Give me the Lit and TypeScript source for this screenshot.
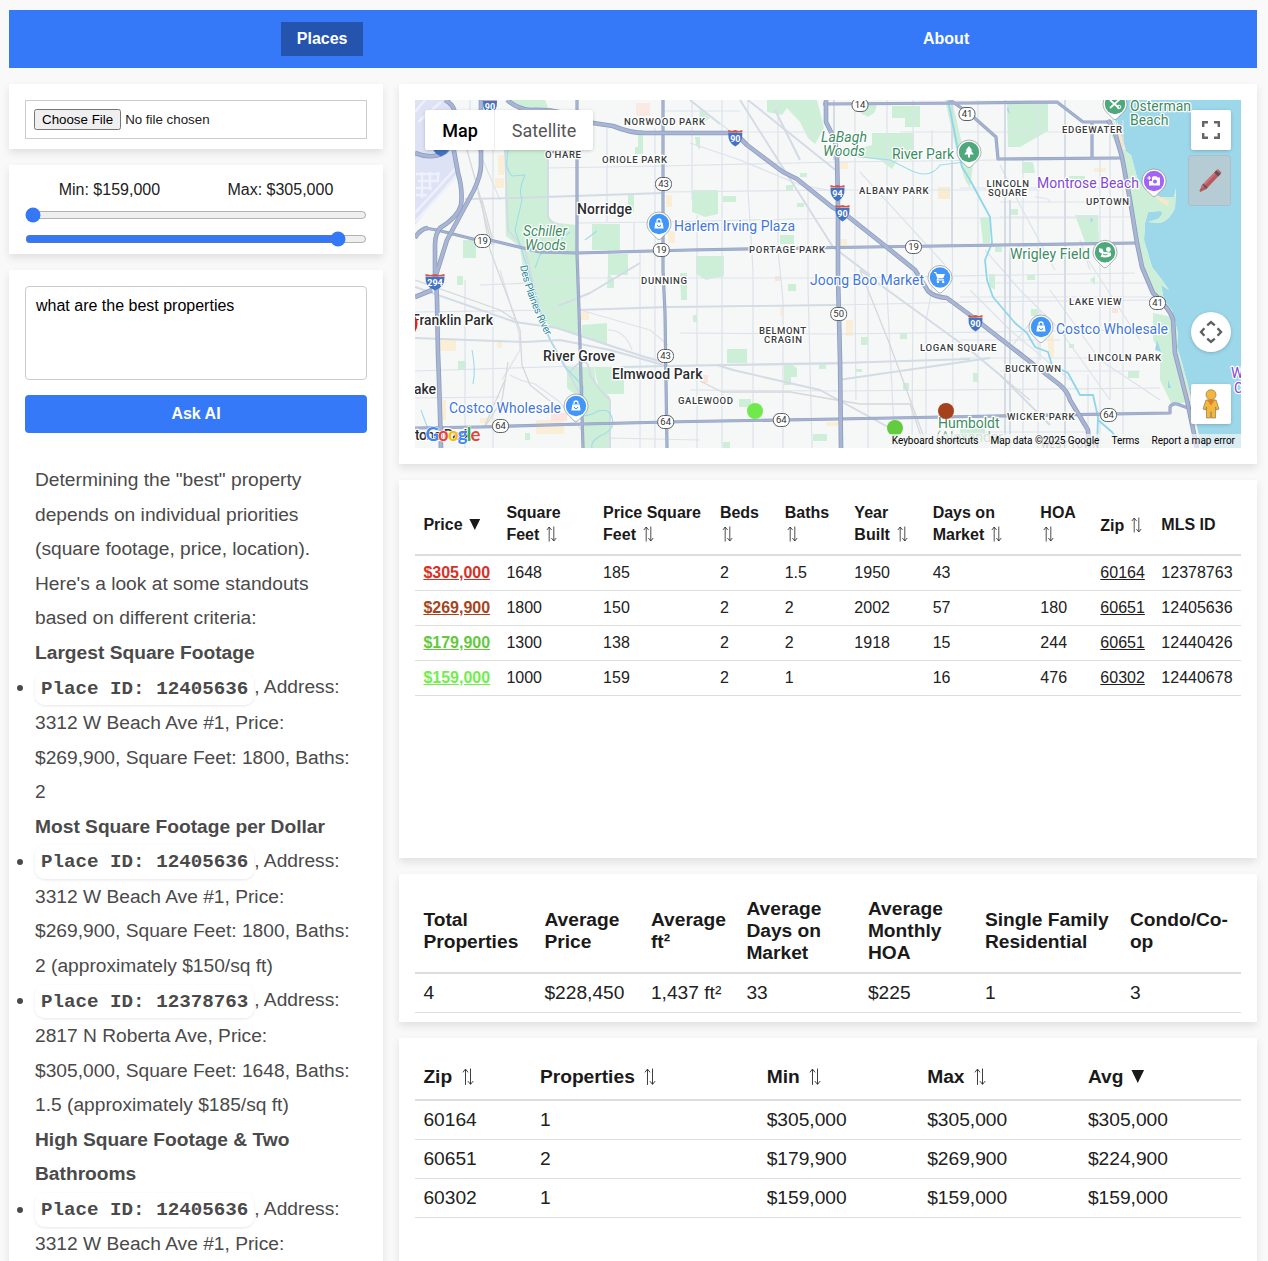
import { LitElement, html, svg, css, nothing } from "lit";
import { customElement } from "lit/decorators.js";

type Label = [string, number, number, number, string];

const LABELS: Label[] = [
  ["NORWOOD PARK", 624, 124.5, 81, "hood"],
  ["O'HARE", 545, 157.5, 36, "hood"],
  ["ORIOLE PARK", 602, 162.5, 65, "hood"],
  ["EDGEWATER", 1062, 132.5, 60, "hood"],
  ["LINCOLN", 986.5, 187, 42.5, "hood"],
  ["SQUARE", 988, 195.5, 39, "hood"],
  ["UPTOWN", 1086, 204.5, 43, "hood"],
  ["ALBANY PARK", 859, 193.5, 69.5, "hood"],
  ["PORTAGE PARK", 749, 252.5, 76, "hood"],
  ["DUNNING", 641, 283.5, 46, "hood"],
  ["GALEWOOD", 678, 403.5, 55, "hood"],
  ["BELMONT", 759, 333.5, 47, "hood"],
  ["CRAGIN", 764, 342.5, 38, "hood"],
  ["LOGAN SQUARE", 920, 350.5, 76.5, "hood"],
  ["LAKE VIEW", 1069, 304.5, 52.5, "hood"],
  ["LINCOLN PARK", 1088, 360.5, 73, "hood"],
  ["BUCKTOWN", 1005, 371.5, 56, "hood"],
  ["WICKER PARK", 1007, 419.5, 67.5, "hood"],
  ["WEST TOWN", 1041, 447.5, 58, "hood faint"],
  ["Norridge", 577, 214, 55, "town"],
  ["Franklin Park", 412, 325, 81, "town"],
  ["River Grove", 543, 361, 72, "town"],
  ["Elmwood Park", 612, 379, 90.5, "town"],
  ["ake", 414, 394, 22, "town"],
  ["tone Park", 415, 440, 56, "town"],
  ["Schiller", 523, 236, 44, "park it"],
  ["Woods", 525, 250, 41, "park it"],
  ["LaBagh", 821, 142, 46, "park it"],
  ["Woods", 823, 156, 42, "park it"],
  ["River Park", 892, 159, 62, "park"],
  ["Osterman", 1130, 111, 61, "park"],
  ["Beach", 1130, 125, 38.5, "park"],
  ["Wrigley Field", 1010, 259, 80, "park"],
  ["Humboldt", 938, 428, 61.5, "park"],
  ["(Alexander", 936, 442, 67, "park faint"],
  ["Harlem Irving Plaza", 674, 231, 121, "shop"],
  ["Joong Boo Market", 810, 285, 114, "shop"],
  ["Costco Wholesale", 449, 413, 112, "shop"],
  ["Costco Wholesale", 1056, 334, 112, "shop"],
  ["Montrose Beach", 1037, 188, 102, "sight"],
  ["W", 1231, 378, 12, "sight"],
  ["C", 1234, 393, 9, "sight"],
];

const PARKS = [
  "M510 100H545L549 110L540 111L525 108Z",
  "M506 150H548V214Q551 222 558 223L577 225L578 270L579 335L550 327L538 312L524 275L520 247L506 236L505 200Z",
  "M592 224H620V250H609V254H628V275H608V250H592Z",
  "M628 195H634V212H622V206H628Z",
  "M582 325L607 323V345L582 335Z",
  "M567 367H594L596 384L610 397V448H584L582 400L567 388Z",
  "M594 367H624V394H600Z",
  "M552 303L558 309L566 322L558 318Z",
  "M638 130H643V154H635V147H638Z",
  "M608 272L614 280V288H607Z", "M680 273H687V300H681Z",
  "M463 240H476V258H463Z", "M457 276H463V285H457Z", "M458 361H466V370H458Z", "M525 433H530V440H525Z",
  "M767 100H817L824 128L815 144L808 138L800 122L787 108L782 115L767 112Z",
  "M872 133H914V160L897 160L892 169L880 160L843 155L841 148L855 150L872 145Z",
  "M892 106H920V127H905V118H892Z", "M855 104H877L875 112L868 117L856 110Z",
  "M692 190H718V214L705 217L692 212Z", "M723 196H736V202H723Z", "M786 185H793V191H786Z",
  "M800 173H807V177H800Z", "M780 235H794V244H780Z", "M696 256H724V276L706 280L696 274Z", "M797 203H804V207H797Z",
  "M700 108L710 118L704 122H699Z", "M695 137H700V150L696 145Z",
  "M727 349H747V363H727Z", "M784 364H791L797 368V377H791V385H784Z", "M788 284H796V291H788Z",
  "M819 364H826V369H819Z", "M861 337H868V345H861Z", "M900 333H907V339H900Z", "M855 369H862V372H855Z",
  "M903 383H909V390H903Z", "M739 399H751V407H739Z", "M813 434H827V441H813Z", "M723 442H730V448H723Z", "M693 315H697V322H693Z",
  "M945 100H952L961 140L973 165L970 188L965 180L955 145Z",
  "M1007 103H1048V131L1020 147L1008 147Z", "M980 217H990V243L983 243Z",
  "M1022 162H1033L1035 173H1022Z", "M1075 215H1098L1099 242H1085Z", "M1069 176H1085V181H1069Z",
  "M1010 209H1018V215H1010Z", "M995 247H1002V252H995Z", "M989 274H995V290L989 286Z",
  "M1031 309H1038V316H1031Z", "M1128 371H1139V378H1128Z", "M1069 344H1074V348H1069Z", "M1027 275H1035V280H1027Z",
  "M1153 313L1172 317L1176 353L1188 402L1172 405L1160 380L1160 350L1153 340Z",
  "M960 427H985V440H960Z", "M1090 280L1095 276V285Z", "M973 373H978V382H973Z",
];

const MINOR: string[] = [
  "M722 100V448M748 100V190L753 270V448M778 100V250L783 300V448M808 190V285L812 448M863 100V115M855 100V290L856 400M868 190V448M887 100V290L895 448M913 100V290L912 448",
  "M932 130V290L926 320V448M952 100L953 448M697 215V448M978 100V448M1038 100V290L1038 448M1123 120V448M1110 120V400M1100 160V448M1023 160V448",
  "M607 128V222M655 128V448M692 100V200M465 280V448M493 100V448M634 222V253M640 253V448",
  "M548 168L663 166L838 162L1000 160M663 192L838 190H952L1040 190M577 223L663 222L838 218H1100M577 278L838 278L1135 273M480 285L578 281",
  "M663 100V111H740M740 132H823M900 132H1092M1000 202H1130M960 188H1125M1000 217H1130M960 283H1150M960 297H1152M960 302L1155 300M415 371L578 366M415 398L500 397M415 312L560 310",
  "M620 367L838 364M680 307L838 305L970 302M680 333L838 334L1130 330M690 390L838 391L1160 388M960 358H1160M1000 371H1140M1040 310V360M1088 375V448M960 340H1060M960 432H1090",
  "M690 143L740 160L800 185L838 192M860 172L945 265M690 100L735 135M1000 165L1020 205L1055 270M1088 260L1140 340M1080 240L1090 270M970 290L1010 330L1070 380",
  "M985 250L1020 290L1060 330L1110 400M1050 290L1100 360L1160 400M1013 345L1040 310M1110 120V160M1050 202Q1050 198 1035 197",
  "M470 100V130L500 200M580 310L650 330L668 345M608 330Q625 330 632 350M502 380L520 350L519 333L500 270M510 375Q520 381 535 384L560 402L595 448M608 448V438L700 440",
];

const ARTERIALS: string[] = [
  "M465 199L515 198L663 193", "M834 100V160", "M740 100L833 247L870 275", "M690 100L720 124", "M748 100L838 172",
  "M578 310L668 307L838 305", "M415 338L525 342L560 340L610 350L667 366", "M415 287L515 322L557 328L608 345L645 357L667 363",
  "M558 306L590 293L640 263", "M620 367L717 365L840 363L970 359", "M717 365L733 370L820 390L890 428", "M860 270L970 350L1000 375L1050 425",
  "M1005 100V448", "M1065 100V448", "M1010 200V448", "M548 150V218Q552 224 558 224", "M952 100V245", "M838 380L990 358", "M775 110L800 160",
  "M505 150L508 230L525 250L545 330L567 370L583 400", "M570 372Q588 350 590 375L600 390L610 400V448",
];

const RAILS: string[] = [
  "M415 280L500 310L515 320", "M467 150L481 200L490 250L520 330L522 365L530 385L555 405", "M505 380L485 425", "M508 362L502 400L486 425",
  "M700 381L722 392H790L860 404H910L925 448", "M860 270L890 345L925 440", "M1000 375L1030 400", "M478 192L492 245", "M482 200L494 245",
];

const WATER_LINES: string[] = [
  "M512 130Q508 140 507 160Q505 168 512 176L525 175Q518 190 522 200L515 230L525 260L540 310L550 340L565 367L583 386V397",
  "M583 416Q592 415 598 411Q610 408 612 418Q616 430 600 436Q590 442 592 448",
  "M570 232L540 255L535 268", "M585 240L597 231", "M843 155L890 160L910 170Q930 180 940 165L965 162",
  "M472 350Q476 370 473 384", "M421 410L432 440",
];

const RIVER = "M948 100L957 145L962 167L970 180L990 217L992 243L985 260L987 280L993 297L1015 323L1027 333L1035 347L1048 352L1052 365L1068 373L1080 395L1093 395L1098 417L1097 448M1098 420L1112 432L1123 448";

const MAJOR: string[] = [
  "M577 100L577 253L579 310L581 380L583 448", "M663 100V270L665 313L667 448", "M415 428L480 427L583 424L690 421.5L838 419L970 416.5L1170 413V407Q1172 403 1177 404L1188 408",
  "M425 228L437 230L477 240L490 240L523 248L540 252L577 253L690 250L835 247.5L970 245.5L1135 243",
  "M823 104L970 103L1057 102L1083 122H1112", "M950 100L970 114L996 137L998 159L1120 158", "M1092 122V158",
];

const FREEWAY: string[] = [
  "M481 100V165Q481 175 474 190L447 240L436 275L437 300L438 353L439 380L441 448",
  "M445 100Q455 105 455 115L452 140L458 173Q463 190 461 205Q458 217 440 228Q435 234 435 245V277",
  "M415 153Q432 160 445 152L452 145", "M415 238Q420 229 428 228", "M415 297L432 290",
  "M507 100Q518 109 530 110Q560 108 593 123L613 126Q630 133 645 133L735 133L747 145L783 172L797 179L832 207L845 214L880 241.7L915 270L928 291Q934 297 947 298L970 315L1060 385Q1068 392 1070 400L1088 430L1089 448",
  "M826 100V122L835 140L837 157L838 207", "M838 207V277L840 360L841 448",
  "M1108 120L1115 133L1122 157L1130 200L1137 243L1142 267L1153 293Q1171 310 1173 320L1175 353L1187 400L1197 448",
];

const LAKE = "M1103 100L1115 120L1124 150L1131 155L1137 177L1145 190L1160 197L1174 197L1176 188L1175 208Q1170 220 1160 223L1148 222L1158 219Q1165 212 1160 211L1148 212L1145 223L1144 240L1152 267L1162 280L1169 290L1161 285L1164 300L1172 310L1178 333L1177 347L1182 363L1190 393L1193 410L1202 448H1241V100Z";
const SHORE = "M1108 128L1113 118L1124 150L1131 155L1137 177L1145 190L1160 197L1174 197L1176 188L1175 208Q1170 220 1160 223L1148 222L1158 219Q1165 212 1160 211L1148 212L1145 223L1144 240L1152 267L1162 280L1169 290L1161 285L1164 300L1172 310L1178 333L1177 347L1182 363L1190 393L1187 400L1175 353L1173 320L1153 293L1142 267L1137 243L1130 200L1122 157Z";

const TINTS: [number, number, number, number, string][] = [
  [495, 178, 9, 10, "#faefd6"], [498, 155, 6, 20, "#faefd6"], [440, 338, 16, 13, "#faefd6"], [497, 340, 5, 8, "#faefd6"],
  [536, 420, 28, 14, "#faefd6"], [551, 413, 16, 8, "#fbe3df"], [636, 103, 14, 13, "#fbe9e4"], [666, 195, 6, 12, "#faefd6"],
  [668, 231, 7, 12, "#faefd6"], [581, 312, 8, 8, "#faefd6"], [838, 162, 10, 7, "#faefd6"], [840, 239, 7, 7, "#faefd6"],
  [846, 320, 7, 16, "#faefd6"], [826, 422, 13, 4, "#faefd6"], [775, 276, 5, 5, "#fbe3df"], [703, 375, 5, 8, "#fbe3df"],
  [780, 307, 3, 9, "#faefd6"], [938, 187, 12, 12, "#f9ecd2"], [1048, 335, 6, 22, "#faefd6"], [1118, 122, 5, 30, "#faefd6"],
  [1094, 168, 12, 4, "#faefd6"], [1112, 308, 6, 5, "#fbe3df"], [480, 418, 12, 5, "#faefd6"], [442, 400, 4, 20, "#faefd6"],
];

const ROUTES: [string, number, number][] = [
  ["43", 663.5, 184], ["19", 482.5, 241], ["19", 661.3, 250], ["14", 860, 105], ["41", 967, 114], ["19", 913.5, 247],
  ["43", 665.5, 356], ["50", 838.7, 314], ["64", 500.5, 426], ["64", 665.7, 422], ["64", 781.3, 420], ["41", 1157.5, 303], ["64", 1108.5, 415],
];

const INTERSTATES: [string, number, number, number][] = [
  ["90", 490, 106, 14], ["90", 735.3, 138, 14], ["94", 837.5, 193, 14], ["90", 842.5, 213, 14], ["90", 975.5, 323, 14], ["294", 435, 282, 19], ["", 441, 148, 18],
];

const GLYPHS: Record<string, unknown> = {
  bag: svg`<path d="M-3.7 -1.5H3.7L4.6 4.6H-4.6Z" fill="#fff"/><path d="M-2 -1.5V-3A2 2 0 0 1 2 -3V-1.5" fill="none" stroke="#fff" stroke-width="1.3"/><path d="M-1.8 .8A1.8 1.8 0 0 0 1.8 .8" fill="none" stroke="#4196f7" stroke-width="1"/>`,
  tree: svg`<path d="M0 -6L3.4 -1.6H2L4.8 2.6H1V5.4H-1V2.6H-4.8L-2 -1.6H-3.4Z" fill="#fff"/>`,
  cart: svg`<path d="M-3.6 -3.6H5L3.2 .8H-2Z" fill="#fff"/><path d="M-6 -5H-4.3L-2 .8L-2.8 2.4H4" fill="none" stroke="#fff" stroke-width="1.2"/><circle cx="-2" cy="4.4" r="1.2" fill="#fff"/><circle cx="3.2" cy="4.4" r="1.2" fill="#fff"/>`,
  camera: svg`<path d="M-2 -3.5L-1 -4.7H2.5L3.5 -3.5H6V4.5H-5V0H-2Z" fill="#fff"/><circle cx="1" cy=".5" r="2" fill="#a364f5"/><path d="M-4.8 -5V-1M-6.8 -3H-2.8" stroke="#fff" stroke-width="1.1"/>`,
  tools: svg`<path d="M-5 4L5 -5M-5 -4L4 4" stroke="#fff" stroke-width="1.8"/><circle cx="4" cy="3" r="1.8" fill="none" stroke="#fff"/>`,
  stadium: svg`<path d="M-6 -4L-2.5 -3.5L-1.5 -.5L6 .5V3.5Q2 6.5 -4.5 4.5L-3 1.5L-6 -.5Z" fill="#fff"/><circle cx="3.4" cy="-2.8" r="2.4" fill="#fff"/><path d="M-2 1.6Q0 3.5 2.5 2" stroke="#4fa77c" fill="none"/>`,
};

const PINS: [number, number, string, string][] = [
  [659, 224, "#4196f7", "bag"], [576, 406, "#4196f7", "bag"], [1041, 327, "#4196f7", "bag"], [940, 277.5, "#4196f7", "cart"],
  [969, 152, "#4fa77c", "tree"], [1115, 104, "#4fa77c", "tools"], [1105, 252.3, "#4fa77c", "stadium"], [1154, 181, "#a364f5", "camera"],
];

const DOTS: [number, number, string][] = [[755, 411, "#6fea4a"], [895, 428, "#63cb3e"], [946, 411, "#a6421b"]];

@customElement("area-map")
class AreaMap extends LitElement {
  static styles = css`
    :host { display: block; position: relative; height: 348px; overflow: hidden; font-family: Roboto, "Liberation Sans", sans-serif; }
    .canvas { display: block; width: 826px; height: 348px; }
    .canvas text { font-family: Roboto, sans-serif; }
    .label { paint-order: stroke; stroke: #fff; stroke-width: 2.5px; stroke-linejoin: round; }
    .hood { font-size: 9.6px; font-weight: 500; fill: #3a3d40; }
    .town { font-size: 14px; font-weight: 500; fill: #2b2d30; }
    .park { font-size: 14px; fill: #3d8b63; }
    .it { font-style: italic; }
    .shop { font-size: 14px; fill: #3f76dd; }
    .sight { font-size: 14px; fill: #8248d6; }
    .faint { opacity: .6; }
    .river { font-size: 10.5px; fill: #2c8799; stroke-width: 1.5px; }
    .num { font-size: 9.5px; fill: #333; text-anchor: middle; }
    .inum { font-size: 9px; font-weight: 700; fill: #fff; text-anchor: middle; }
    .canvas .logo { font-family: Lato, sans-serif; font-weight: 700; font-size: 18.5px; paint-order: stroke; stroke: #fff; stroke-width: 1.2px; }
    .types { position: absolute; left: 10px; top: 10px; display: flex; height: 40px; background: #fff; border-radius: 2px; box-shadow: 0 1px 4px -1px rgba(0,0,0,.3); font-size: 18px; line-height: 42px; color: #565656; }
    .type { box-sizing: border-box; width: 70px; text-align: center; }
    .type.on { color: #000; font-weight: 500; border-right: 1px solid #eee; padding-left: 1px; }
    .type.sat { width: 98px; }
    .ctl { position: absolute; right: 10px; width: 40px; height: 40px; background: #fff; border-radius: 2px; box-shadow: 0 1px 4px -1px rgba(0,0,0,.3); display: flex; align-items: center; justify-content: center; }
    .full { top: 10px; }
    .move { top: 212px; border-radius: 50%; }
    .peg { top: 284px; }
    .draw { top: 55px; width: 43px; height: 51px; box-sizing: border-box; border-radius: 3px; background: #b6ccd5; border: 1px solid #aabfc8; box-shadow: none; }
    .foot { position: absolute; right: 0; bottom: 0; height: 14px; display: flex; font-size: 10px; line-height: 14px; color: #000; background: rgba(245,245,245,.7); padding: 0 6px 0 3px; gap: 12px; white-space: nowrap; }
  `;

  private group(paths: string[], stroke: string, width: number) {
    return svg`<g fill="none" stroke=${stroke} stroke-width=${width} stroke-linejoin="round">${paths.map((d) => svg`<path d=${d}/>`)}</g>`;
  }

  render() {
    return html`
      <svg class="canvas" viewBox="415 100 826 348">
        <rect x="415" y="100" width="826" height="348" fill="#f6f7f7"/>
        <path d="M415 100H450L453 150L458 172L440 193L415 225Z" fill="#dde2f5"/>
        <g stroke="#eef1fd" stroke-width="2.4" fill="none">
          <path d="M415 112L425 100M418 122L441 102M415 213L456 168M415 222L457 176M416 174H440M418 181H438M416 188H432M416 195H427M422 172V198M430 172V190M438 172V182"/>
        </g>
        ${TINTS.map(([x, y, w, h, f]) => svg`<rect x=${x} y=${y} width=${w} height=${h} fill=${f}/>`)}
        <g fill="#cdefd8">${PARKS.map((d) => svg`<path d=${d}/>`)}</g>
        <path d=${LAKE} fill="#9dd7ea"/>
        <path d=${SHORE} fill="#cdefd8"/>
        <path d="M1117 120L1126 150L1122 150L1116 134ZM1156 195L1169 201L1168 206L1158 200ZM1182 375L1190 395L1187 398Z" fill="#f9e8c8"/>
        <path d="M1008 106L1010 115L1007 110ZM1157 340L1161 352L1155 350ZM1168 380L1171 388H1168ZM1090 217L1093 219L1091 223Z" fill="#9dd7ea"/>
        ${this.group(MINOR, "#dde3eb", 1.2)}
        ${this.group(ARTERIALS, "#d3dbe5", 1.9)}
        ${this.group(RAILS, "#d5d8dc", 1.3)}
        ${this.group(WATER_LINES, "#9fdbec", 1.1)}
        ${this.group([RIVER], "#8fd6ea", 1.8)}
        ${this.group(MAJOR, "#93a3c4", 3.2)}
        ${this.group(MAJOR, "#a6b3d0", 1.8)}
        ${this.group(FREEWAY, "#8c9cc0", 4.6)}
        ${this.group(FREEWAY, "#a9b6d3", 3)}
        <path id="desplaines" d="M520 266Q527 300 547 338" fill="none"/>
        <text class="label river"><textPath href="#desplaines" textLength="75">Des Plaines River</textPath></text>
        ${LABELS.map(([t, x, y, w, c]) => svg`<text class="label ${c}" x=${x} y=${y} textLength=${w}>${t}</text>`)}
        ${ROUTES.map(([n, x, y]) => svg`<rect x=${x - 8} y=${y - 6.5} width="16" height="13" rx="6" fill="#fff" stroke="#5a5f66" stroke-width="1"/><text class="num" x=${x} y=${y + 3.4}>${n}</text>`)}
        ${INTERSTATES.map(([n, x, y, w]) => svg`<path d="M${x - w / 2} ${y - 5}H${x + w / 2}Q${x + w / 2 + 0.5} ${y + 5} ${x} ${y + 8.5}Q${x - w / 2 - 0.5} ${y + 5} ${x - w / 2} ${y - 5}Z" fill="#4373c4"/><path d="M${x - w / 2} ${y - 8}L${x - w / 4} ${y - 7}L${x} ${y - 8}L${x + w / 4} ${y - 7}L${x + w / 2} ${y - 8}V${y - 5.4}H${x - w / 2}Z" fill="#cc5650"/><text class="inum" x=${x} y=${y + 4}>${n}</text>`)}
        <path d="M415 316Q420 323 415 332Z" fill="#e2231a"/>
        ${PINS.map(([x, y, f, g]) => svg`<g transform="translate(${x} ${y})"><path d="M-12 0A12 12 0 1 1 12 0C12 6 8 8.5 1.8 14.8Q0 16.4 -1.8 14.8C-8 8.5 -12 6 -12 0Z" fill="#fff" stroke="#6f767d" stroke-opacity=".55" stroke-width="1"/><circle r="10.2" fill=${f}/>${GLYPHS[g]}</g>`)}
        ${DOTS.map(([x, y, f]) => svg`<circle cx=${x} cy=${y} r="8" fill=${f}/>`)}
        <text class="logo" x="425.5" y="440.5" textLength="55"><tspan fill="#4285f4">G</tspan><tspan fill="#ea4335">o</tspan><tspan fill="#fbbc04">o</tspan><tspan fill="#4285f4">g</tspan><tspan fill="#34a853">l</tspan><tspan fill="#ea4335">e</tspan></text>
      </svg>
      <div class="types"><div class="type on">Map</div><div class="type sat">Satellite</div></div>
      <div class="ctl full"><svg width="18" height="18" viewBox="0 0 18 18" fill="none" stroke="#666" stroke-width="2.4"><path d="M1.2 6V1.2H6M12 1.2H16.8V6M16.8 12V16.8H12M6 16.8H1.2V12"/></svg></div>
      <div class="ctl draw"><svg width="26" height="26" viewBox="-13 -13 26 26"><g transform="rotate(-46)"><path d="M-14.5 -.8L-9.5 -2.3V2.3L-14.5 .8Z" fill="#b55a5c"/><rect x="-10" y="-2.8" width="24" height="5.6" rx="1" fill="#b9595d"/><rect x="-10" y="-2.8" width="24" height="2" fill="#ca7477"/><rect x="-8" y="-2.8" width="1.6" height="5.6" fill="#5d5054"/><rect x="9" y="-2.8" width="3" height="5.6" fill="#5d5054"/></g></svg></div>
      <div class="ctl move"><svg width="24" height="24" viewBox="-12 -12 24 24" fill="none" stroke="#5f6163" stroke-width="2.4"><path d="M-3.8 -6.6L0 -10L3.8 -6.6M-3.8 6.6L0 10L3.8 6.6M-6.6 -3.8L-10 0L-6.6 3.8M6.6 -3.8L10 0L6.6 3.8"/></svg></div>
      <div class="ctl peg"><svg width="20" height="32" viewBox="-10 -16 20 32"><path d="M-5 -4H5L8 5L5.5 6L4.5 3V14H.5V8H-.5V14H-4.5V3L-5.5 6L-8 5Z" fill="#f3b73e" stroke="#8f7a4a" stroke-width=".7"/><circle cy="-9.3" r="5" fill="#f3b73e" stroke="#8f7a4a" stroke-width=".7"/><path d="M-4 -4.3H4L0 1.5Z" fill="#d9822b"/></svg></div>
      <div class="foot"><span>Keyboard shortcuts</span><span>Map data ©2025 Google</span><span>Terms</span><span>Report a map error</span></div>
    `;
  }
}

type Head = [string, "none" | "sort" | "desc", string?];
type Home = { cells: string[]; color: string };

const HOME_HEADS: Head[] = [
  ["Price", "desc"], ["Square Feet", "sort", "two"], ["Price Square Feet", "sort", "two"], ["Beds", "sort", "two"], ["Baths", "sort", "two"],
  ["Year Built", "sort", "two"], ["Days on Market", "sort", "two"], ["HOA", "sort", "two"], ["Zip", "sort", "low"], ["MLS ID", "none"],
];
const HOMES: Home[] = [
  { color: "#d93025", cells: ["$305,000", "1648", "185", "2", "1.5", "1950", "43", "", "60164", "12378763"] },
  { color: "#a6441c", cells: ["$269,900", "1800", "150", "2", "2", "2002", "57", "180", "60651", "12405636"] },
  { color: "#63c93c", cells: ["$179,900", "1300", "138", "2", "2", "1918", "15", "244", "60651", "12440426"] },
  { color: "#72ee4c", cells: ["$159,000", "1000", "159", "2", "1", "", "16", "476", "60302", "12440678"] },
];
const STATS: [string, string][] = [
  ["Total Properties", "4"], ["Average Price", "$228,450"], ["Average ft²", "1,437 ft²"], ["Average Days on Market", "33"],
  ["Average Monthly HOA", "$225"], ["Single Family Residential", "1"], ["Condo/Co-op", "3"],
];
const ZIP_HEADS: Head[] = [["Zip", "sort", "low"], ["Properties", "sort", "low"], ["Min", "sort", "low"], ["Max", "sort", "low"], ["Avg", "desc"]];
const ZIPS = [
  ["60164", "1", "$305,000", "$305,000", "$305,000"],
  ["60651", "2", "$179,900", "$269,900", "$224,900"],
  ["60302", "1", "$159,000", "$159,000", "$159,000"],
];

const HOME_COLS = [83, 96.7, 116.8, 64.8, 69.7, 78.3, 107.7, 60, 61, 88];
const STAT_COLS = [121, 106.5, 95.5, 121.5, 117, 145, 119.5];
const ZIP_COLS = [116.5, 226.8, 160.5, 160.7, 161.5];

const ANSWER: { title: string; items: [string, string][] }[] = [
  { title: "Largest Square Footage", items: [["Place ID: 12405636", ", Address: 3312 W Beach Ave #1, Price: $269,900, Square Feet: 1800, Baths: 2"]] },
  { title: "Most Square Footage per Dollar", items: [
    ["Place ID: 12405636", ", Address: 3312 W Beach Ave #1, Price: $269,900, Square Feet: 1800, Baths: 2 (approximately $150/sq ft)"],
    ["Place ID: 12378763", ", Address: 2817 N Roberta Ave, Price: $305,000, Square Feet: 1648, Baths: 1.5 (approximately $185/sq ft)"],
  ] },
  { title: "High Square Footage & Two Bathrooms", items: [["Place ID: 12405636", ", Address: 3312 W Beach Ave #1, Price: $269,900, Square Feet: 1800, Baths: 2"]] },
];

@customElement("app-root")
class AppRoot extends LitElement {
  static styles = css`
    :host { display: block; box-sizing: border-box; height: 1261px; overflow: hidden; padding: 10px 11px 0 9px; background: #f9f9f9; color: #212121; font: 16px/18px "Liberation Sans", Arial, sans-serif; }
    *, *::before { box-sizing: border-box; }
    .nav { display: flex; justify-content: space-around; align-items: center; height: 58px; background: #3579f8; }
    .tab { padding: 8px 16px; color: #fff; font-weight: 700; }
    .tab.on { background: #2454ad; }
    .page { display: grid; grid-template-columns: 374px 858px; gap: 16px; margin-top: 16px; align-items: start; }
    .col { display: flex; flex-direction: column; gap: 16px; }
    .card { background: #fff; padding: 16px; box-shadow: 0 4px 8px rgba(0,0,0,.1); }
    .upload { height: 65px; }
    .file { display: block; width: 100%; height: 39px; border: 1px solid #ccc; padding: 8px; font: 13.333px "Liberation Sans", Arial, sans-serif; color: #212121; }
    .prices { height: 89px; display: flex; flex-direction: column; }
    .bounds { display: flex; justify-content: space-around; margin-bottom: 8px; }
    .slider { display: block; width: 100%; height: 16px; margin: 0 0 8px; accent-color: #3478f7; }
    .chat { min-height: 1100px; }
    .ask { display: block; width: 100%; height: 94px; border: 1px solid #ccc; border-radius: 4px; padding: 10px; resize: none; font: 16px/18px "Liberation Sans", Arial, sans-serif; color: #000; outline: none; }
    .go { margin-top: 15px; height: 38px; border-radius: 4px; background: #3579f8; color: #fff; font-weight: 700; text-align: center; line-height: 37px; }
    .answer { margin-top: 30px; padding: 0 10px; font-size: 19.2px; line-height: 34.56px; color: #4a4a4a; }
    .list { margin: 0; padding: 0; }
    .id { font: 700 19.2px/34.56px "Liberation Mono", monospace; padding: 5.76px 6px; border-radius: 10px; background: #fff; box-shadow: 0 1px 3px rgba(0,0,0,.1); }
    .mapcard { height: 380px; }
    .homes { height: 378px; }
    .stats { height: 148px; }
    .zips { height: 400px; }
    .grid { width: 826px; table-layout: fixed; border-collapse: separate; border-spacing: 0; }
    .grid th { text-align: left; font-weight: 700; line-height: 22px; padding: 0 7px 0 8.4px; border-bottom: 2px solid #ddd; vertical-align: middle; color: #1a1a1a; }
    .grid td { padding: 8px 7px 8px 8.4px; border-bottom: 1px solid #ddd; height: 35px; line-height: 18px; }
    .grid th.two { padding-bottom: 2px; }
    .grid th.low { padding-top: 1px; }
    .homes .grid th { height: 60px; }
    .big { font-size: 19.2px; }
    .big td { height: 39px; line-height: 22px; }
    .stats .grid th { height: 84px; }
    .zips .grid th { height: 47px; }
    .price { font-weight: 700; text-decoration: underline; }
    .zip { text-decoration: underline; }
    .sort { display: inline-block; vertical-align: -2px; margin-left: 2.5px; }
    .big .sort { margin-left: 4px; width: 12px; height: 17.5px; }
    .desc { display: inline-block; vertical-align: 0; margin-left: 2px; }
    .big .desc { width: 14px; height: 13px; }
  `;

  private head([label, kind, cls = ""]: Head) {
    const sort = html`<svg class="sort" width="11" height="16" viewBox="0 0 11 16" fill="none" stroke="#222" stroke-width=".8"><path d="M3.2 15.5V1.2M.8 4L3.2 1L5.6 4M7.8 .5V14.8M5.4 12L7.8 15L10.2 12"/></svg>`;
    const desc = html`<svg class="desc" width="12" height="11" viewBox="0 0 12 11"><path d="M.4 0H11.2L5.8 11Z" fill="#1a1a1a"/></svg>`;
    return html`<th class=${cls}>${label} ${kind === "desc" ? desc : kind === "sort" ? sort : nothing}</th>`;
  }

  private cols(widths: number[]) {
    return html`<colgroup>${widths.map((w) => html`<col style="width:${w}px">`)}</colgroup>`;
  }

  private homeCell(value: string, i: number, color: string) {
    if (i === 0) return html`<td><span class="price" style="color:${color}">${value}</span></td>`;
    if (i === 8) return html`<td><span class="zip">${value}</span></td>`;
    return html`<td>${value}</td>`;
  }

  render() {
    return html`
      <div class="nav"><div class="tab on">Places</div><div class="tab">About</div></div>
      <div class="page">
        <div class="col">
          <div class="card upload"><input class="file" type="file"></div>
          <div class="card prices">
            <div class="bounds"><span>Min: $159,000</span><span>Max: $305,000</span></div>
            <input class="slider" type="range" min="0" max="1000" .value=${"0"}>
            <input class="slider" type="range" min="0" max="1000" .value=${"936"}>
          </div>
          <div class="card chat">
            <textarea class="ask" spellcheck="false" .value=${"what are the best properties"}></textarea>
            <div class="go">Ask AI</div>
            <div class="answer">
              Determining the "best" property depends on individual priorities (square footage, price, location). Here's a look at some standouts based on different criteria:
              ${ANSWER.map((s) => html`<div><b>${s.title}</b></div><ul class="list">${s.items.map(([id, rest]) => html`<li><span class="id">${id}</span>${rest}</li>`)}</ul>`)}
            </div>
          </div>
        </div>
        <div class="col">
          <div class="card mapcard"><area-map></area-map></div>
          <div class="card homes">
            <table class="grid">${this.cols(HOME_COLS)}
              <thead><tr>${HOME_HEADS.map((h) => this.head(h))}</tr></thead>
              <tbody>${HOMES.map((r) => html`<tr>${r.cells.map((v, i) => this.homeCell(v, i, r.color))}</tr>`)}</tbody>
            </table>
          </div>
          <div class="card stats">
            <table class="grid big">${this.cols(STAT_COLS)}
              <thead><tr>${STATS.map(([h]) => html`<th>${h}</th>`)}</tr></thead>
              <tbody><tr>${STATS.map(([, v]) => html`<td>${v}</td>`)}</tr></tbody>
            </table>
          </div>
          <div class="card zips">
            <table class="grid big">${this.cols(ZIP_COLS)}
              <thead><tr>${ZIP_HEADS.map((h) => this.head(h))}</tr></thead>
              <tbody>${ZIPS.map((r) => html`<tr>${r.map((v) => html`<td>${v}</td>`)}</tr>`)}</tbody>
            </table>
          </div>
        </div>
      </div>
    `;
  }
}
